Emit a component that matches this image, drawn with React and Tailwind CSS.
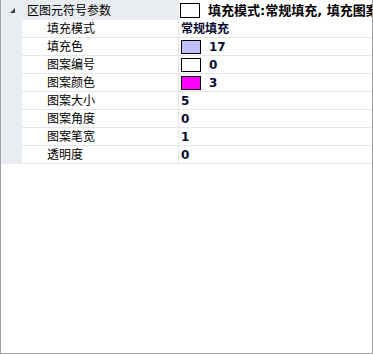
import React from "react";

const rows = [
  { label: "填充模式", value: "常规填充" },
  { label: "填充色", value: "17", swatch: "#c0c0ff" },
  { label: "图案编号", value: "0", swatch: "#ffffff" },
  { label: "图案颜色", value: "3", swatch: "#ff00ff" },
  { label: "图案大小", value: "5" },
  { label: "图案角度", value: "0" },
  { label: "图案笔宽", value: "1" },
  { label: "透明度", value: "0" },
];

const font = { fontFamily: '"DejaVu Sans", "Noto Sans CJK SC", sans-serif' };

export default function App() {
  return (
    <div
      className="w-[373px] h-[354px] bg-white border-l border-r border-b border-[#a0a0a0] overflow-hidden text-black"
      style={font}
    >
      {/* header row */}
      <div className="flex h-[20px]">
        <div className="w-[177px] shrink-0 bg-[#e9ecf0] flex items-center pt-[1px]">
          <div className="w-[22px] shrink-0 flex items-center justify-center">
            <svg width="5" height="5" viewBox="0 0 5 5">
              <polygon points="5,0 5,5 0,5" fill="#3c3c3c" />
            </svg>
          </div>
          <span className="ml-[4px] text-[12px] leading-none whitespace-nowrap">区图元符号参数</span>
        </div>
        <div className="w-px shrink-0 bg-[#e9ecf0]" />
        <div className="flex-1 flex items-center pl-[1px] overflow-hidden bg-white">
          <div className="w-[20px] h-[15px] shrink-0 border border-black bg-white" />
          <span className="ml-[8px] text-[13px] font-bold leading-none whitespace-nowrap">
            填充模式:常规填充, 填充图案
          </span>
        </div>
      </div>

      {/* child rows */}
      {rows.map((r) => (
        <div key={r.label} className="flex h-[18px]">
          <div className="w-[21px] shrink-0 bg-[#e9ecf0]" />
          <div className="flex-1 flex border-b border-[#e6e6e6]">
            <div className="w-[156px] shrink-0 flex items-center pl-[25px] pt-[1px]">
              <span className="text-[12px] leading-none whitespace-nowrap">{r.label}</span>
            </div>
            <div className="w-px shrink-0 bg-[#e6e6e6]" />
            <div className="flex-1 flex items-center pl-[2px] overflow-hidden">
              {r.swatch ? (
                <>
                  <div
                    className="w-[20px] h-[14px] shrink-0 border border-black"
                    style={{ backgroundColor: r.swatch }}
                  />
                  <span className="ml-[8px] text-[12px] font-bold leading-none text-[#0a0a30]">
                    {r.value}
                  </span>
                </>
              ) : (
                <span className="text-[12px] font-bold leading-none text-[#0a0a30] whitespace-nowrap">
                  {r.value}
                </span>
              )}
            </div>
          </div>
        </div>
      ))}
    </div>
  );
}
